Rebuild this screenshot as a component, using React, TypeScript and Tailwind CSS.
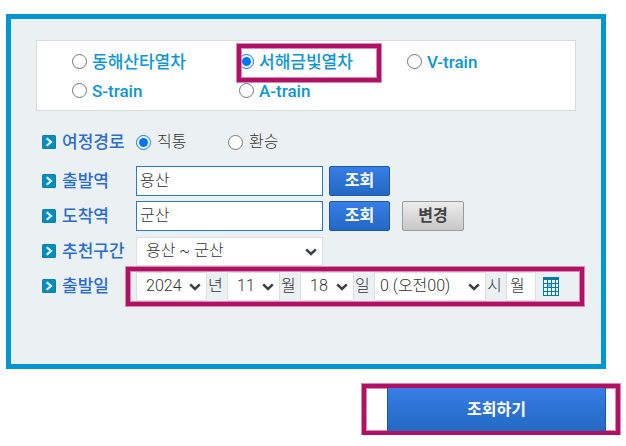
import { useState, type ReactNode } from "react";

const FONT = "font-[Roboto,'Noto_Sans_CJK_KR',sans-serif]";
const MARK = "border-4 border-[#b11164] ring-1 ring-[#d88ab2] inset-ring-1 inset-ring-[#d88ab2]";
const BLUE =
  "border border-[#1c57a8] bg-linear-to-b from-[#377ee8] to-[#2368c2] font-bold text-white";

function Bullet() {
  return (
    <svg className="size-[14px] shrink-0" viewBox="0 0 14 14" aria-hidden="true">
      <rect width="14" height="14" rx="1.5" fill="#0b7fae" />
      <rect x="1" y="1" width="12" height="12" fill="#0a8cbd" />
      <path d="M4.7 3.2 9 7l-4.3 3.8" fill="none" stroke="#dff3fa" strokeWidth="2.2" />
    </svg>
  );
}

const ROW_LABEL = "text-[17px] leading-5 font-medium whitespace-nowrap text-[#2a6dcb]";

function Row({ label, htmlFor, children }: { label: string; htmlFor?: string; children: ReactNode }) {
  return (
    <div className="flex h-[30px] items-center">
      <div className="flex w-[94px] shrink-0 items-center gap-[6px]">
        <Bullet />
        {htmlFor ? (
          <label htmlFor={htmlFor} className={ROW_LABEL}>
            {label}
          </label>
        ) : (
          <span className={ROW_LABEL}>{label}</span>
        )}
      </div>
      {children}
    </div>
  );
}

function Picker({ id, label, width, pad, options }: {
  id: string;
  label: string;
  width: string;
  pad: string;
  options: string[];
}) {
  return (
    <div className={`relative h-[29px] shrink-0 ${width}`}>
      <select
        id={id}
        aria-label={label}
        className={`size-full appearance-none border border-[#dcdfe1] bg-white text-base leading-5 font-light text-[#333] ${pad}`}
      >
        {options.map((o) => (
          <option key={o}>{o}</option>
        ))}
      </select>
      <svg className="pointer-events-none absolute top-[11px] right-[6px] h-2 w-3" viewBox="0 0 12 8" aria-hidden="true">
        <path d="M1.2 1.3 6 6l4.8-4.7" fill="none" stroke="#3c4043" strokeWidth="2.5" />
      </svg>
    </div>
  );
}

const TRAINS = ["동해산타열차", "서해금빛열차", "V-train", "S-train", "A-train"];
const UNIT = "w-5 shrink-0 pl-px text-base leading-5 font-light whitespace-nowrap text-[#333]";
const FIELD =
  "w-[187px] h-[30px] border border-[#2a78d0] bg-white px-[3px] pb-1 text-base font-light text-[#333]";

export default function App() {
  const [train, setTrain] = useState(TRAINS[1]);
  const [route, setRoute] = useState("직통");
  const [from, setFrom] = useState("용산");
  const [to, setTo] = useState("군산");

  return (
    <form className={`pt-[14px] pr-[6px] pl-[6px] ${FONT}`} onSubmit={(e) => e.preventDefault()}>
      <div className="mr-[14px] border-[5px] border-[#0096d0] bg-[#ebf0f3] px-[25px] pt-[21px] pb-[63px]">
        <fieldset className="grid grid-cols-[167px_168px_1fr] border border-[#d9d9d9] bg-white pt-[6px] pb-[5px] pl-[35px]">
          {TRAINS.map((t) => (
            <div key={t} className="relative flex h-[29px] items-center gap-[5px]">
              <input
                id={t}
                type="radio"
                name="train"
                className="size-[15px] shrink-0"
                checked={train === t}
                onChange={() => setTrain(t)}
              />
              <label htmlFor={t} className="text-[17px] leading-5 font-medium whitespace-nowrap text-[#0e96d6]">
                {t}
              </label>
              {t === "서해금빛열차" && (
                <span className={`pointer-events-none absolute -top-[3px] -left-[2px] h-[38px] w-36 ${MARK}`} />
              )}
            </div>
          ))}
        </fieldset>

        <div className="flex flex-col gap-[5px] pt-4 pl-[6px]">
          <div className="pb-1" role="radiogroup" aria-label="여정경로">
            <Row label="여정경로">
              {["직통", "환승"].map((r) => (
                <label key={r} className="flex w-[92px] items-center gap-[6px] text-base font-light text-[#333]">
                  <input
                    type="radio"
                    name="route"
                    className="size-[15px]"
                    checked={route === r}
                    onChange={() => setRoute(r)}
                  />
                  {r}
                </label>
              ))}
            </Row>
          </div>
          <Row label="출발역" htmlFor="from">
            <input id="from" className={FIELD} value={from} onChange={(e) => setFrom(e.target.value)} />
            <button type="button" className={`ml-[6px] h-[30px] w-[61px] rounded-xs text-base leading-5 ${BLUE}`}>
              조회
            </button>
          </Row>
          <Row label="도착역" htmlFor="to">
            <input id="to" className={FIELD} value={to} onChange={(e) => setTo(e.target.value)} />
            <button type="button" className={`ml-[6px] h-[30px] w-[61px] rounded-xs text-base leading-5 ${BLUE}`}>
              조회
            </button>
            <button
              type="button"
              className="ml-3 h-[30px] w-[62px] rounded-xs border border-[#999da0] bg-linear-to-b from-[#ececec] to-[#c8c8c8] text-base leading-5 font-bold text-[#444]"
            >
              변경
            </button>
          </Row>
          <Row label="추천구간" htmlFor="section">
            <Picker id="section" label="추천구간" width="w-[187px]" pad="pl-[9px]" options={["용산 ~ 군산"]} />
          </Row>
          <div className="relative">
            <Row label="출발일" htmlFor="year">
              <Picker id="year" label="년" width="w-[71px]" pad="pl-[9px]" options={["2024"]} />
              <span className={UNIT}>년</span>
              <Picker id="month" label="월" width="w-[53px]" pad="pl-[9px]" options={["11"]} />
              <span className={UNIT}>월</span>
              <Picker id="day" label="일" width="w-[54px]" pad="pl-[9px]" options={["18"]} />
              <span className={UNIT}>일</span>
              <Picker id="hour" label="시" width="w-28" pad="pl-[5px]" options={["0 (오전00)"]} />
              <span className={UNIT}>시</span>
              <input
                aria-label="요일"
                readOnly
                value="월"
                className="h-[29px] w-[30px] shrink-0 border border-[#dcdfe1] bg-white px-[3px] pb-1 text-base font-light text-[#333]"
              />
              <button type="button" aria-label="달력" className="ml-[7px] shrink-0">
                <svg className="block h-[19px] w-4" viewBox="0 0 16 19" aria-hidden="true">
                  <rect width="16" height="19" fill="#0779a8" />
                  {[3, 7, 11, 15].map((y) =>
                    [1, 5, 9, 13].map((x) => (
                      <rect
                        key={`${x}-${y}`}
                        x={x}
                        y={y}
                        width={x === 13 ? 2 : 3}
                        height="3"
                        fill={x === 5 && y === 7 ? "#7fc3dc" : "#e6f6fb"}
                      />
                    )),
                  )}
                </svg>
              </button>
            </Row>
            <span className={`pointer-events-none absolute -top-1 left-[84px] h-[39px] w-[458px] ${MARK}`} />
          </div>
        </div>
      </div>

      <div className={`mt-[15px] ml-auto w-[258px] pr-[10px] pl-[21px] ${MARK}`}>
        <button type="submit" className={`block h-[43px] w-full border-y-0 text-base leading-5 ${BLUE}`}>
          조회하기
        </button>
      </div>
    </form>
  );
}
